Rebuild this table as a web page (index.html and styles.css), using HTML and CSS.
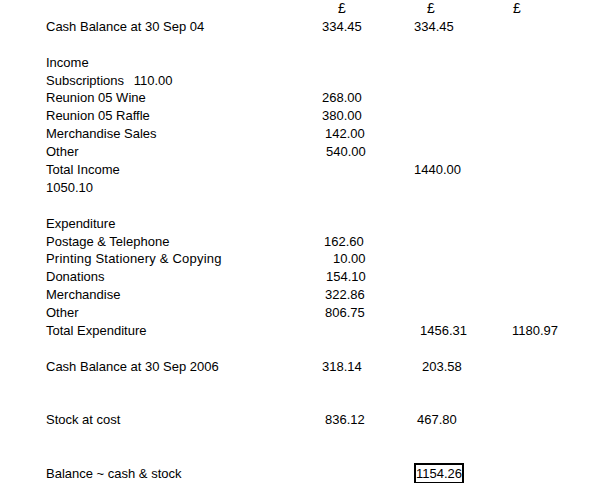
FILE: index.html
```
<!DOCTYPE html>
<html>
<head>
<meta charset="utf-8">
<link rel="stylesheet" href="styles.css">
</head>
<body>
<div class="sheet">
  <div class="row"><span></span><span class="cur c1">£</span><span class="cur c2">£</span><span class="cur c3">£</span></div>
  <div class="row"><span>Cash Balance at 30 Sep 04</span><span>334.45</span><span>334.45</span><span></span></div>
  <div class="row"></div>
  <div class="row"><span>Income</span></div>
  <div class="row"><span>Subscriptions <span class="sub">110.00</span></span></div>
  <div class="row"><span>Reunion 05 Wine</span><span>268.00</span></div>
  <div class="row"><span>Reunion 05 Raffle</span><span>380.00</span></div>
  <div class="row"><span>Merchandise Sales</span><span class="p3">142.00</span></div>
  <div class="row"><span>Other</span><span class="p4">540.00</span></div>
  <div class="row"><span>Total Income</span><span></span><span>1440.00</span></div>
  <div class="row"><span>1050.10</span></div>
  <div class="row"></div>
  <div class="row"><span>Expenditure</span></div>
  <div class="row"><span>Postage &amp; Telephone</span><span class="p2">162.60</span></div>
  <div class="row"><span class="wide">Printing Stationery &amp; Copying</span><span class="p11">10.00</span></div>
  <div class="row"><span>Donations</span><span class="p4">154.10</span></div>
  <div class="row"><span>Merchandise</span><span class="p3">322.86</span></div>
  <div class="row"><span>Other</span><span class="p3">806.75</span></div>
  <div class="row"><span>Total Expenditure</span><span></span><span class="p6">1456.31</span><span>1180.97</span></div>
  <div class="row"></div>
  <div class="row"><span>Cash Balance at 30 Sep 2006</span><span>318.14</span><span class="p8">203.58</span></div>
  <div class="row"></div>
  <div class="row"></div>
  <div class="row"><span>Stock at cost</span><span class="p3">836.12</span><span class="p3">467.80</span></div>
  <div class="row"></div>
  <div class="row"></div>
  <div class="row"><span>Balance ~ cash &amp; stock</span><span></span><span><span class="boxed">1154.26</span></span></div>
</div>
</body>
</html>
```
FILE: styles.css
```
html, body {
  margin: 0;
  padding: 0;
  background: #fff;
}
body {
  font-family: "Liberation Sans", Arial, sans-serif;
  font-size: 13px;
  color: #000;
}
.sheet {
  padding-left: 46px;
}
.row {
  display: grid;
  grid-template-columns: 276px 92px 98px 1fr;
  height: 17.9px;
  line-height: 17.9px;
  white-space: nowrap;
}
.wide { letter-spacing: 0.2px; }
.sub { margin-left: 6px; }
.cur { font-size: 14px; }
.c1 { padding-left: 16px; }
.c2 { padding-left: 13px; }
.c3 { padding-left: 1px; }
.p2 { padding-left: 2px; }
.p3 { padding-left: 3px; }
.p4 { padding-left: 4px; }
.p6 { padding-left: 6px; }
.p8 { padding-left: 8px; }
.p11 { padding-left: 11px; }
.boxed {
  display: inline-block;
  vertical-align: top;
  margin-top: -2px;
  border: 2px solid #000;
  line-height: 17px;
  padding: 0;
}
```
